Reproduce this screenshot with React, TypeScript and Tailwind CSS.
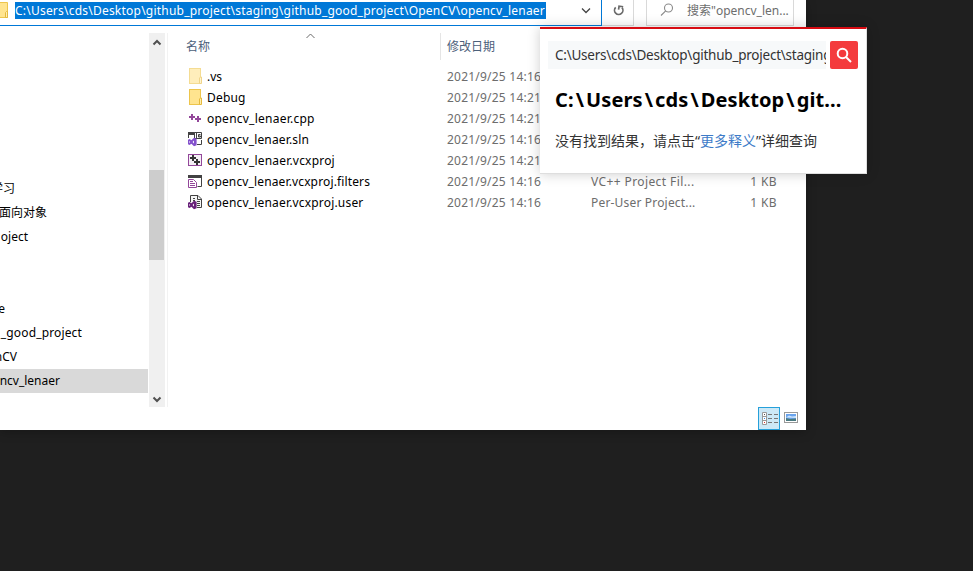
import React from "react";

type IconKind = "folderFaded" | "folder" | "cpp" | "sln" | "vcxproj" | "filters" | "user";

const files: { icon: IconKind; name: string; track: string; date: string; type?: string; typeTrack?: string; size?: string }[] = [
  { icon: "folderFaded", name: ".vs", track: "tracking-normal", date: "2021/9/25 14:16" },
  { icon: "folder", name: "Debug", track: "tracking-[0.2px]", date: "2021/9/25 14:21" },
  { icon: "cpp", name: "opencv_lenaer.cpp", track: "tracking-[0.24px]", date: "2021/9/25 14:21" },
  { icon: "sln", name: "opencv_lenaer.sln", track: "tracking-[0.16px]", date: "2021/9/25 14:16" },
  { icon: "vcxproj", name: "opencv_lenaer.vcxproj", track: "tracking-[0.2px]", date: "2021/9/25 14:21" },
  { icon: "filters", name: "opencv_lenaer.vcxproj.filters", track: "tracking-[0.14px]", date: "2021/9/25 14:16", type: "VC++ Project Fil...", typeTrack: "tracking-[0.4px]", size: "1 KB" },
  { icon: "user", name: "opencv_lenaer.vcxproj.user", track: "tracking-[0.18px]", date: "2021/9/25 14:16", type: "Per-User Project...", typeTrack: "tracking-[0.18px]", size: "1 KB" },
];

const tree = [
  { label: "学习", width: "w-[15px]" },
  { label: "面向对象", width: "w-[47px]" },
  { label: "oject", width: "w-[28px]" },
  { label: "", width: "w-0" },
  { label: "", width: "w-0" },
  { label: "e", width: "w-[5px]" },
  { label: "_good_project", width: "w-[82px] tracking-[0.15px]" },
  { label: "nCV", width: "w-[17px]" },
  { label: "ncv_lenaer", width: "w-[60px]", selected: true },
];

function VsMark({ color }: { color: string }) {
  return (
    <path
      fillRule="evenodd"
      fill={color}
      d="M6 6.800 8.600 7.800v6.400L6 15.200 3.400 12.700 1.600 14 0 13.200V8.800l1.600-.8L3.400 9.300zM6 9.400 4.600 11 6 12.600zM1.200 10v2l1.100-1z"
    />
  );
}

function FileIcon({ kind }: { kind: IconKind }) {
  if (kind === "folder" || kind === "folderFaded") {
    return (
      <svg className={kind === "folder" ? "mb-px h-4 w-4 shrink-0" : "mb-px h-4 w-4 shrink-0 opacity-60"} viewBox="0 0 16 16">
        <rect x="1.500" y=".5" width="11" height="15" fill="#ffe48f" stroke="#edc54c" />
        <path d="M11.500 15.500V10l1-1h1v6.500z" fill="#ffeeb0" stroke="#e5b93d" />
      </svg>
    );
  }
  return (
    <svg className="mb-px h-4 w-4 shrink-0" viewBox="0 0 16 16">
      {kind === "cpp" && (
        <path d="M1 7h6M4 4v6M7 9h6M10 6v6" stroke="#93479a" strokeWidth="2" fill="none" />
      )}
      {kind === "sln" && (
        <>
          <path d="M0 1h7v3H1v3H0z" fill="#424242" />
          <path d="M6.500 1.500h7v6h-7z" fill="#fff" stroke="#424242" />
          <path d="M8.500 2v5M12.500 3.500h-2v2.500h2V5h-2" stroke="#424242" fill="none" />
          <path d="M13.500 9v4.500H9" stroke="#424242" fill="none" />
          <VsMark color="#8351cc" />
        </>
      )}
      {kind === "vcxproj" && (
        <>
          <rect x=".5" y="2.500" width="13" height="11" fill="#f4eff5" stroke="#93479a" />
          <path d="M2 6h6M5 3v6M6 10h6M9 7v6" stroke="#333" strokeWidth="2" fill="none" />
        </>
      )}
      {kind === "filters" && (
        <>
          <path d="M0 2h14v3H0z" fill="#424242" />
          <path d="M13.500 4v9.500H9.500" stroke="#424242" fill="none" />
          <path d="M.5 6.500h5L8.500 9.500v5H.5z" fill="#fff" stroke="#93479a" />
          <path d="M2 8.500h3M2 10.500h5M2 12.500h5" stroke="#93479a" />
        </>
      )}
      {kind === "user" && (
        <>
          <path d="M2.500 8V1.500H10L13.500 5v8.500H9" fill="#f6f6f6" stroke="#424242" />
          <path d="M9.500 2v3.500H13M5 4.500h2M5 6.500h2M9 7.500h3M9 9.500h3M9 11.500h3" stroke="#424242" fill="none" />
          <VsMark color="#68217a" />
        </>
      )}
    </svg>
  );
}

function AddressBar() {
  return (
    <div className="flex h-[26px] shrink-0">
      <div className="flex w-[602px] shrink-0 items-start border-r border-b border-[#0078d7]">
        <svg className="mt-0.5 h-4 w-[9px] shrink-0" viewBox="0 0 9 16">
          <path d="M0 .5h7.500v15H0" fill="#ffe48f" stroke="#edc54c" />
          <path d="M5.500 15.500v-5l1-1h1v6z" fill="#ffeeb0" stroke="#e5b93d" />
        </svg>
        <span className="mt-0.5 ml-1.5 h-[17px] w-[531px] shrink-0 bg-[#0078d7] text-[12px] leading-[17px] tracking-[0.22px] whitespace-nowrap text-white">
          C:\Users\cds\Desktop\github_project\staging\github_good_project\OpenCV\opencv_lenaer
        </span>
        <svg className="mt-[7px] ml-[35px] h-2 w-[10px]" viewBox="0 0 10 8" fill="none" stroke="#444" strokeWidth="1.300">
          <path d="m1 1.500 4 4 4-4" />
        </svg>
      </div>
      <div className="flex w-8 shrink-0 justify-center border-r border-b border-[#d9d9d9]">
        <svg className="mt-[5px] ml-0.5 h-3 w-3" viewBox="0 0 12 12" fill="none" stroke="#6a6a6a" strokeWidth="1.700">
          <path d="M2.700 2.300A4.200 4.200 0 1 0 9 2.600" />
          <path d="M5.800 4.600V1.200H10" transform="rotate(8 6 3)" />
        </svg>
      </div>
      <div className="ml-3 flex w-[148px] shrink-0 border-r border-b border-l border-[#d9d9d9]">
        <svg className="mt-[3px] ml-[13px] h-[14px] w-[14px] shrink-0" viewBox="0 0 14 14" fill="none" stroke="#8a8a8a" strokeWidth="1.100">
          <circle cx="8.500" cy="5" r="4" />
          <path d="M5.700 7.800 1 12.500" />
        </svg>
        <span className="mt-0.5 ml-[13px] text-[12px] leading-[17px] whitespace-nowrap text-[#6d6d6d]">搜索"opencv_len...</span>
      </div>
    </div>
  );
}

function Sidebar() {
  return (
    <div className="flex w-[168px] shrink-0 border-r border-[#f2f2f2]">
      <div className="flex w-[148px] shrink-0 flex-col pt-36">
        {tree.map((t, i) => (
          <div key={i} className={t.selected ? "flex h-6 items-center bg-[#d9d9d9]" : "flex h-6 items-center"}>
            <span className={`${t.width} flex justify-end text-[12px] whitespace-nowrap text-black`}>{t.label}</span>
          </div>
        ))}
      </div>
      <div className="ml-px flex w-4 flex-col items-center bg-[#f0f0f0]">
        <svg className="mt-1.5 h-[7px] w-2.5 shrink-0" viewBox="0 0 10 7" fill="none" stroke="#505050" strokeWidth="2">
          <path d="m1.500 5.500 3.500-3.500 3.500 3.500" />
        </svg>
        <div className="mt-[124px] mr-px h-[90px] w-[15px] shrink-0 bg-[#cdcdcd]" />
        <svg className="mt-auto mb-1 h-[7px] w-2.5 shrink-0" viewBox="0 0 10 7" fill="none" stroke="#505050" strokeWidth="2">
          <path d="m1.500 1.500 3.500 3.500 3.500-3.500" />
        </svg>
      </div>
    </div>
  );
}

function FileList() {
  return (
    <div className="flex flex-1 flex-col text-[12px]">
      <div className="flex h-[27px] text-[#4c607a]">
        <span className="w-[124px] pt-[5px] pl-[18px] leading-[18px]">名称</span>
        <svg className="ml-3.5 h-1.5 w-[9px] shrink-0" viewBox="0 0 9 6" fill="none" stroke="#6a6a6a">
          <path d="m.5 5 4-4 4 4" />
        </svg>
        <span className="ml-[125px] border-l border-[#e5e5e5] pt-[5px] pl-1.5 leading-[18px]">修改日期</span>
      </div>
      <div className="mt-1.5 flex flex-col">
        {files.map((f) => (
          <div key={f.name} className="flex h-[21px] items-center pl-5 whitespace-nowrap text-[#6d6d6d]">
            <FileIcon kind={f.icon} />
            <span className={`${f.track} w-[243px] shrink-0 pl-[3px] text-black`}>{f.name}</span>
            <span className="w-36 shrink-0 tracking-[0.22px]">{f.date}</span>
            <span className={`${f.typeTrack ?? ""} w-[110px] shrink-0`}>{f.type}</span>
            <span className="w-[76px] shrink-0 text-right tracking-[0.4px]">{f.size}</span>
          </div>
        ))}
      </div>
    </div>
  );
}

function StatusBar() {
  return (
    <div className="flex h-[23px] shrink-0 items-start pl-[758px]">
      <div className="flex h-[23px] w-[22px] items-center justify-center border border-[#26a0da] bg-[#cce8f6]">
        <svg className="ml-0.5 h-[13px] w-4 shrink-0" viewBox="0 0 16 13" fill="none">
          <path d="M.5.5h4v12h-4zM.5 4.500h4M.5 8.500h4" fill="#fff" stroke="#999" />
          <path d="M6 2.500h4M12 2.500h4M6 6.500h4M12 6.500h4M6 10.500h4M12 10.500h4" stroke="#777" />
          <path d="M2 2h1v1H2z" fill="#555" />
          <path d="M2 6h1v1H2z" fill="#338de8" />
          <path d="M2 10h1v1H2z" fill="#e03131" />
        </svg>
      </div>
      <svg className="mt-[5px] ml-1 h-[11px] w-[14px]" viewBox="0 0 14 11">
        <rect x=".5" y=".5" width="13" height="10" fill="#fff" stroke="#999" />
        <path d="M2 2h10v7H2z" fill="#6aa4ee" />
        <path d="M2 5.500 5 3.500l3 1 4-.5v2z" fill="#cfe5fa" />
        <path d="M2 6l4 1 6-.5V9H2z" fill="#4a7a80" />
      </svg>
    </div>
  );
}

function LookupPopup() {
  return (
    <div className="absolute top-[27px] left-[540px] flex h-[147px] w-[327px] flex-col border-t-2 border-r border-b border-[#dedede] border-t-[#d70b12] bg-white pt-3 pl-2 shadow-[0_0_12px_rgba(0,0,0,0.2)]">
      <div className="flex h-7 gap-1">
        <div className="flex w-[278px] items-center overflow-hidden bg-[#f7f9fa] pl-[7px] text-[13.5px] tracking-[-0.23px] whitespace-nowrap text-[#333]">
          C:\Users\cds\Desktop\github_project\staging
        </div>
        <div className="flex w-7 items-center justify-center rounded-xs bg-[#f43b3d]">
          <svg className="h-4 w-4" viewBox="0 0 16 16" fill="none" stroke="white" strokeWidth="2">
            <circle cx="6.500" cy="6.500" r="4.800" />
            <path d="m10 10 5 5" />
          </svg>
        </div>
      </div>
      <div className="mt-[17px] flex pl-[7px] text-[20px] leading-7 font-bold tracking-[0.1px] whitespace-nowrap text-black">
        <span>C:</span>
        <span className="px-[2px]">\</span>
        <span>Users</span>
        <span className="px-[2px]">\</span>
        <span>cds</span>
        <span className="px-[2px]">\</span>
        <span>Desktop</span>
        <span className="px-[2px]">\</span>
        <span>git...</span>
      </div>
      <div className="mt-[17px] pl-[7px] text-[14px] leading-5 whitespace-nowrap text-[#333]">
        没有找到结果，请点击“<span className="text-[#3d7bc8]">更多释义</span>”详细查询
      </div>
    </div>
  );
}

export default function App() {
  return (
    <div className="relative h-[571px] w-[973px] overflow-hidden bg-[#1f1f1f] font-['Noto_Sans','Noto_Sans_CJK_SC',sans-serif]">
      <div className="flex h-[430px] w-[806px] flex-col bg-white shadow-[0_2px_10px_rgba(0,0,0,0.25)]">
        <AddressBar />
        <div className="mt-[7px] flex h-[374px] shrink-0">
          <Sidebar />
          <FileList />
        </div>
        <StatusBar />
      </div>
      <LookupPopup />
    </div>
  );
}
